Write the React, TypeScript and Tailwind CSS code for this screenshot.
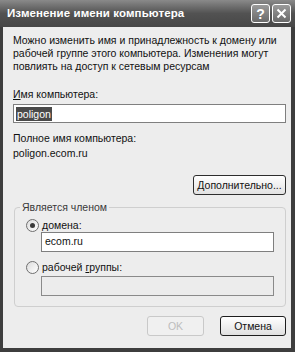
import React from 'react';

const font = { fontFamily: '"Liberation Sans", Arial, sans-serif' };

function Radio({ checked }: { checked?: boolean }) {
    return (
        <span className="flex h-[13px] w-[13px] shrink-0 items-center justify-center rounded-full border border-[#6f6f6f] bg-gradient-to-br from-[#dcdcdc] to-white">
            {checked && <span className="h-[5px] w-[5px] rounded-full bg-[#3a3a3a]" />}
        </span>
    );
}

function TitleButton({ children }: { children: React.ReactNode }) {
    return (
        <div className="flex h-[19px] w-[19px] items-center justify-center rounded-[3px] border border-white bg-gradient-to-b from-[#9a9a9a] to-[#6a6a6a] text-[14px] font-bold leading-none text-white">
            {children}
        </div>
    );
}

export default function App() {
    return (
        <div className="flex h-[352px] w-[295px] flex-col bg-[#3e3e3e] text-[10.5px] text-[#111]" style={font}>
            {/* Title bar */}
            <div className="flex h-[27px] shrink-0 items-center justify-between bg-gradient-to-b from-[#8a8a8a] via-[#525252] to-[#474747] pl-[7px] pr-[4px]">
                <span className="text-[11.5px] font-bold tracking-[0.1px] text-white">Изменение имени компьютера</span>
                <div className="flex gap-[2px]">
                    <TitleButton>?</TitleButton>
                    <TitleButton>
                        <svg width="11" height="11" viewBox="0 0 11 11">
                            <path d="M1.5 1.5 L9.5 9.5 M9.5 1.5 L1.5 9.5" stroke="white" strokeWidth="2" />
                        </svg>
                    </TitleButton>
                </div>
            </div>

            {/* Body */}
            <div className="mb-[4px] ml-[3px] mr-[4px] flex flex-1 flex-col bg-[#ededed] pl-[10px] pr-[5px] pt-[7px]">
                <p className="whitespace-nowrap leading-[13px]">
                    Можно изменить имя и принадлежность к домену или
                    <br />
                    рабочей группе этого компьютера. Изменения могут
                    <br />
                    повлиять на доступ к сетевым ресурсам
                </p>

                <div className="mt-[15px] leading-[13px]">
                    <span className="underline">И</span>мя компьютера:
                </div>
                <div className="mt-[3px] flex h-[19px] items-center border border-[#7f7f7f] bg-white pl-[2px]">
                    <span className="bg-[#4a4a4a] px-[1px] leading-[14px] text-white">poligon</span>
                </div>

                <div className="mt-[9px] leading-[13px]">Полное имя компьютера:</div>
                <div className="mt-[2px] leading-[13px]">poligon.ecom.ru</div>

                <div className="mt-[15px] flex justify-end">
                    <button className="h-[20px] w-[93px] rounded-[3px] border border-[#2e2e2e] bg-gradient-to-b from-white to-[#e2e2e2] leading-none">
                        <span className="underline">Д</span>ополнительно...
                    </button>
                </div>

                <fieldset className="ml-[1px] mt-[6px] rounded-[4px] border border-[#cfcfcf] pb-[10px] pl-[5px] pr-[11px]">
                    <legend className="px-[2px] leading-[13px] text-[#3a3a3a]">Является членом</legend>
                    <div className="pl-[6px]">
                        <div className="mt-[5px] flex h-[13px] items-center gap-[3px]">
                            <Radio checked />
                            <span>
                                <span className="underline">д</span>омена:
                            </span>
                        </div>
                        <div className="ml-[15px] mt-0 flex h-[20px] items-center border border-[#7f7f7f] bg-white pl-[3px]">
                            ecom.ru
                        </div>
                        <div className="mt-[9px] flex h-[13px] items-center gap-[3px]">
                            <Radio />
                            <span>
                                рабочей <span className="underline">г</span>руппы:
                            </span>
                        </div>
                        <div className="ml-[15px] mt-[2px] h-[20px] border border-[#8a8a8a] bg-[#ececec]" />
                    </div>
                </fieldset>

                <div className="mt-[9px] flex justify-end gap-[16px]">
                    <button className="h-[20px] w-[57px] rounded-[3px] border border-[#c9c9c9] bg-[#f0f0f0] leading-none text-[#bdbdbd]" disabled>
                        OK
                    </button>
                    <button className="h-[20px] w-[66px] rounded-[3px] border border-[#1e1e1e] bg-gradient-to-b from-white to-[#e0e0e0] leading-none">
                        Отмена
                    </button>
                </div>
            </div>
        </div>
    );
}
